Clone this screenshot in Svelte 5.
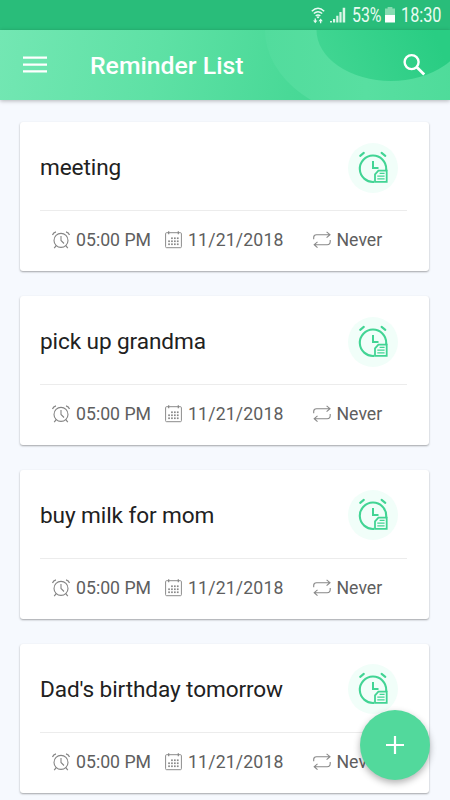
<script>
	const reminders = [
		{ title: 'meeting', time: '05:00 PM', date: '11/21/2018', repeat: 'Never' },
		{ title: 'pick up grandma', time: '05:00 PM', date: '11/21/2018', repeat: 'Never' },
		{ title: 'buy milk for mom', time: '05:00 PM', date: '11/21/2018', repeat: 'Never' },
		{ title: "Dad's birthday tomorrow", time: '05:00 PM', date: '11/21/2018', repeat: 'Never' }
	];

	// calendar day dots, first row starts one column later
	const days = [];
	for (let row = 0; row < 3; row++) {
		for (let col = 0; col < 4; col++) {
			if (row === 0 && col === 0) continue;
			days.push({ x: 3.2 + col * 2.9, y: 6.4 + row * 3 });
		}
	}
</script>

<div class="screen">
	<div class="status-bar">
		<svg class="wifi" width="14" height="17" viewBox="0 0 14 17">
			<g fill="none" stroke="#e9fbf2" stroke-width="1.4">
				<path d="M.8 4.2Q7-1.7 13.2 4.2" />
				<path d="M2.8 6.6Q7 2.7 11.2 6.6" />
				<path d="M4.7 8.9Q7 6.9 9.3 8.9" />
			</g>
			<path
				d="M7 9l1.4 1.2L7 11.4l-1.4-1.2zM3.6 11.5h1.3v2h1.5L4.25 16.2 2.1 13.5h1.5zM9 16.2h1.3v-2h1.5L9.65 11.5l-2.15 2.7H9z"
				fill="#e9fbf2"
			/>
		</svg>
		<svg class="signal" width="16" height="16" viewBox="0 0 16 16">
			<path
				d="M0 15.5V14h2v1.5zM3 15.5V12h2.2v3.5zM6.2 15.5V8.8h2.2v6.7zM9.4 15.5V5h2.2v10.5zM12.7 15.5V.8h2.5v14.7z"
				fill="#d9f6e7"
			/>
		</svg>
		<svg class="percent" width="30" height="30">
			<text x="0" y="22" textLength="29.5" lengthAdjust="spacingAndGlyphs">53%</text>
		</svg>
		<svg class="battery" width="10" height="16" viewBox="0 0 10 16">
			<path d="M2.6 0h4.8v1.6H10V8.5H0V1.6h2.6z" fill="#86dcb1" />
			<path d="M0 8h10v7.5H0z" fill="#fff" />
		</svg>
		<svg class="clock" width="41" height="30">
			<text x="0" y="22" textLength="40.5" lengthAdjust="spacingAndGlyphs">18:30</text>
		</svg>
	</div>

	<header class="app-bar">
		<svg class="rings" width="450" height="70" viewBox="0 0 450 70" aria-hidden="true">
			<defs>
				<linearGradient id="ring" x1="0" y1="0" x2="1" y2="0">
					<stop offset="0" stop-color="#52dc9d" />
					<stop offset="0.4" stop-color="#58dfa1" />
					<stop offset="1" stop-color="#47d995" />
				</linearGradient>
				<linearGradient id="disc" x1="0" y1="0.8" x2="1" y2="0.5">
					<stop offset="0" stop-color="#42d693" />
					<stop offset="0.8" stop-color="#29cd83" />
				</linearGradient>
			</defs>
			<ellipse cx="392" cy="0" rx="127" ry="91" fill="url(#ring)" />
			<ellipse cx="391" cy="0" rx="74.5" ry="51" fill="url(#disc)" />
		</svg>
		<button class="icon-button" type="button" aria-label="Menu">
			<svg width="24" height="18" viewBox="0 0 24 18">
				<path d="M0 1.6h24M0 8.6h24M0 15.4h24" stroke="#fff" stroke-width="2.4" />
			</svg>
		</button>
		<h1>Reminder List</h1>
		<button class="icon-button search" type="button" aria-label="Search">
			<svg width="23" height="23" viewBox="0 0 23 23" fill="none" stroke="#fff">
				<circle cx="8.6" cy="8.1" r="7" stroke-width="2.4" />
				<path d="M13.6 13.1l7.6 7.4" stroke-width="2.8" />
			</svg>
		</button>
	</header>

	<main class="list">
		{#each reminders as reminder}
			<article class="card">
				<div class="card-top">
					<h2>{reminder.title}</h2>
					<div class="badge">
						<svg width="32" height="32" viewBox="0 0 32 32" fill="none" stroke="#42d494">
							<path d="M17 29.9A13.2 13.2 0 1 1 29.2 17v2" stroke-width="2.1" />
							<path d="M3.2 3.9l3.6-3M24.6 .9l3.7 3" stroke-width="2.1" stroke-linecap="round" />
							<path d="M16 9v7h5.5" stroke-width="2" />
							<path d="M18 29.9V22.4l3.4-3.8h8.3v11.3z" fill="#f1fef9" stroke-width="1.8" />
							<path d="M22.6 21.3h5M20.3 24.1h7.3M20.3 26.9h7.3" stroke-width="1.3" />
						</svg>
					</div>
				</div>
				<div class="details">
					<span class="detail time">
						<svg width="18" height="18" viewBox="0 0 18 18" fill="none" stroke="#858585">
							<circle cx="9" cy="9.4" r="7" stroke-width="1.1" />
							<path d="M9 5v4.5l3 3" stroke-width="1.1" />
							<path d="M.5 4Q1.3 1.5 4 .9M14 .9q2.7.6 3.5 3.1M4.2 14.7l-2 2.5M13.8 14.7l2 2.5" stroke-width="1.2" />
						</svg>
						{reminder.time}
					</span>
					<span class="detail date">
						<svg width="17" height="18" viewBox="0 0 17 18">
							<rect x=".6" y="1.7" width="15.8" height="15" rx="1" fill="none" stroke="#8c8c8c" />
							<path d="M3.7 .2v3M13.3 .2v3" stroke="#858585" stroke-width="1.2" />
							{#each days as day}
								<rect x={day.x} y={day.y} width="1.7" height="1.7" fill="#888" />
							{/each}
						</svg>
						{reminder.date}
					</span>
					<span class="detail repeat">
						<svg width="18" height="18" viewBox="0 0 18 18" fill="none" stroke="#888" stroke-width="1.1">
							<path d="M.7 8.2V6.5Q.7 3.7 3.5 3.7H17M13.6 .8L17 3.7l-3.4 2.9" />
							<path d="M17.2 9v1.5q0 3.2-3 3.2H1.2M4.5 10.8l-3.3 2.9 3.3 2.9" />
						</svg>
						{reminder.repeat}
					</span>
				</div>
			</article>
		{/each}
	</main>

	<button class="fab" type="button" aria-label="Add reminder">
		<svg width="18" height="18" viewBox="0 0 18 18">
			<path d="M9 0v18M0 9h18" stroke="#fff" stroke-width="2.2" />
		</svg>
	</button>
</div>

<style>
	:global(body) {
		margin: 0;
		overflow: hidden;
	}

	.screen {
		position: relative;
		width: 450px;
		height: 800px;
		overflow: hidden;
		background: #f6f9fe;
		font-family: Roboto, sans-serif;
	}

	svg {
		display: block;
		flex: none;
		overflow: visible;
	}

	button {
		border: none;
		padding: 0;
	}

	.status-bar {
		display: flex;
		align-items: center;
		justify-content: flex-end;
		box-sizing: border-box;
		height: 30px;
		padding-right: 8px;
		background: #29bd7a;
	}

	.status-bar text {
		fill: #e9fbf2;
		font-size: 19.5px;
	}

	.wifi {
		margin-right: 5px;
	}

	.signal {
		margin-right: 6px;
	}

	.percent {
		margin-right: 3px;
	}

	.battery {
		margin-right: 6px;
	}

	.app-bar {
		position: relative;
		z-index: 1;
		display: flex;
		align-items: center;
		box-sizing: border-box;
		height: 70px;
		padding: 0 24px 0 23px;
		background: linear-gradient(100deg, #73e7b3 0%, #5ee1a5 35%, #49d997 65%, #38d28b 100%);
		box-shadow: 0 1px 4px rgba(0, 0, 0, 0.28);
	}

	.rings {
		position: absolute;
		inset: 0;
		overflow: hidden;
	}

	.icon-button {
		position: relative;
		background: transparent;
	}

	h1 {
		position: relative;
		flex: 1;
		margin: 2px 0 0 43px;
		color: #fff;
		font-size: 24.8px;
		font-weight: 500;
		line-height: 30px;
	}

	.list {
		display: flex;
		flex-direction: column;
		gap: 24.8px;
		padding: 22.3px 21px 0 20px;
	}

	.card {
		box-sizing: border-box;
		height: 149px;
		padding: 0 22px 0 20px;
		background: #fff;
		border-radius: 3px;
		box-shadow: 0 1px 2px rgba(0, 0, 0, 0.34);
	}

	.card-top {
		display: flex;
		align-items: center;
		justify-content: space-between;
		height: 88px;
		padding-right: 9px;
		border-bottom: 1px solid #ececec;
	}

	h2 {
		margin: 4px 0 0;
		color: #212121;
		font-size: 22.6px;
		font-weight: 400;
		letter-spacing: -0.1px;
		line-height: 30px;
	}

	.badge {
		display: flex;
		align-items: center;
		justify-content: center;
		width: 50px;
		height: 50px;
		margin-top: 3px;
		border-radius: 50%;
		background: #f1fef9;
	}

	.details {
		display: flex;
		align-items: center;
		height: 58px;
		padding-left: 12px;
		color: #5e5e5e;
		font-size: 17.7px;
	}

	.detail {
		display: flex;
		align-items: center;
		gap: 6px;
	}

	.time {
		width: 113px;
	}

	.date {
		width: 147.5px;
		letter-spacing: 0.15px;
	}

	.fab {
		position: absolute;
		z-index: 2;
		right: 20px;
		bottom: 20px;
		display: flex;
		align-items: center;
		justify-content: center;
		width: 70px;
		height: 70px;
		border-radius: 50%;
		background: #52d99c;
		box-shadow: 0 3px 7px rgba(0, 0, 0, 0.3);
	}
</style>
